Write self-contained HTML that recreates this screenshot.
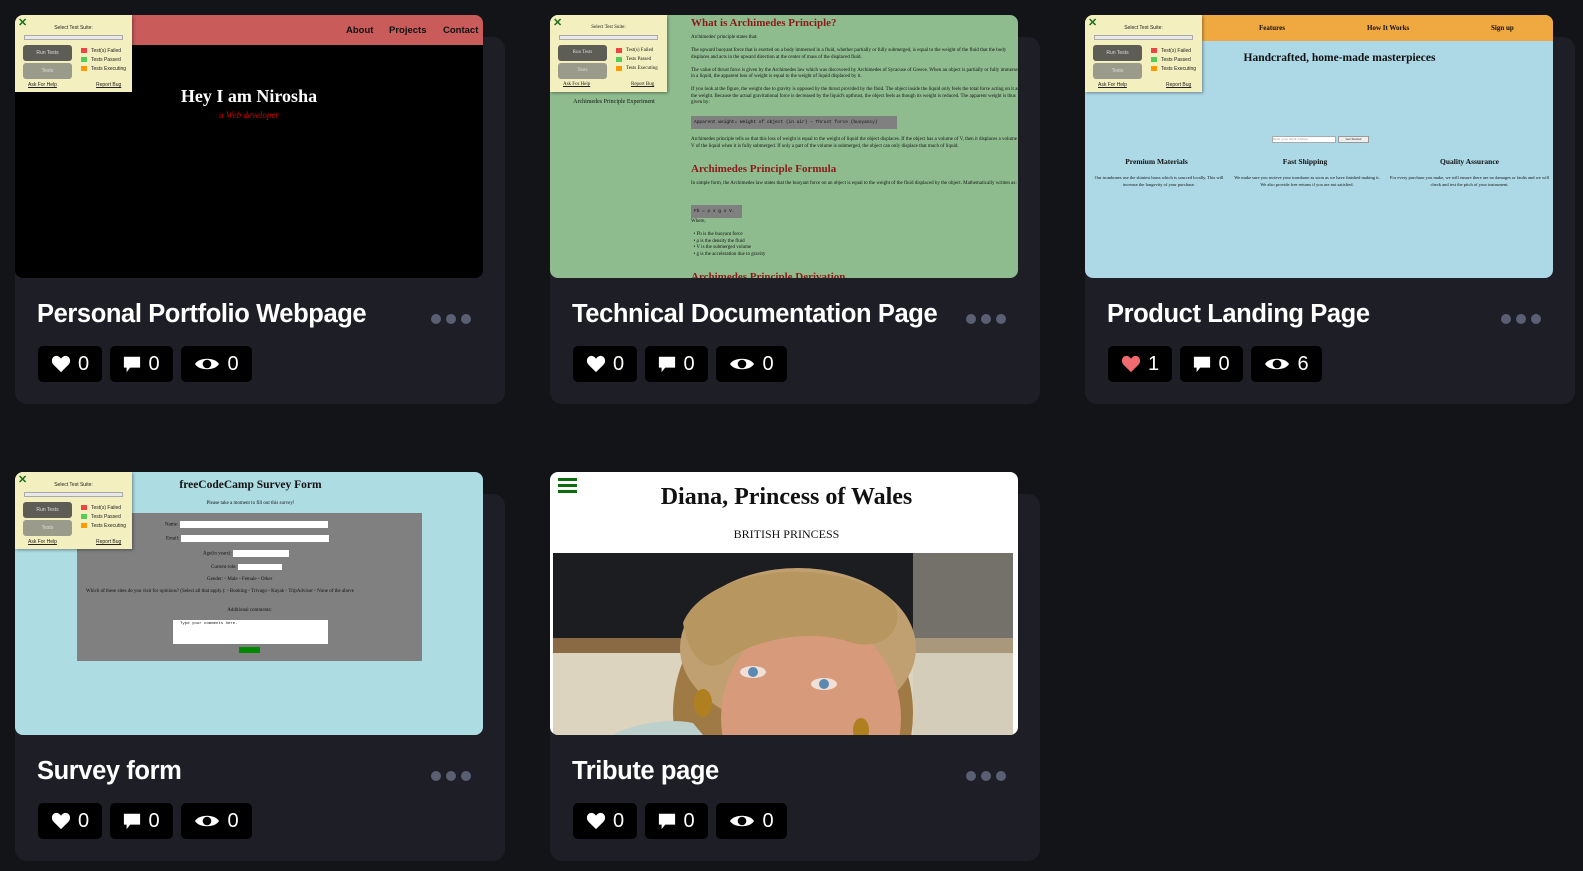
<!DOCTYPE html>
<html><head><meta charset="utf-8"><style>
*{box-sizing:border-box;margin:0;padding:0}
body{width:1583px;height:871px;background:#131417;overflow:hidden;position:relative;font-family:"Liberation Sans",sans-serif}
.card{position:absolute;width:490px;height:367px;background:#1e1f26;border-radius:12px}
.thumb{position:absolute;width:468px;height:263px;border-radius:8px;overflow:hidden}
.title{position:absolute;color:#fff;font-weight:bold;font-size:25.5px;letter-spacing:-0.4px;white-space:nowrap}
.dots{position:absolute;display:flex;gap:5px}
.dots i{width:10px;height:10px;border-radius:50%;background:#5a5f73;display:block}
.stat{position:absolute;height:36px;background:#000;border-radius:5px;color:#fff;font-size:20px;display:flex;align-items:center;justify-content:center;gap:7px}
.stat svg{display:block}
.ts{position:absolute;left:0;top:0;width:117px;height:77px;background:#f4efbf;box-shadow:1px 1px 3px rgba(0,0,0,.4);font-size:5px;color:#222;z-index:2}
.ts .x{position:absolute;left:3px;top:1px;color:#1a6e1a;font-size:11px;font-weight:bold}
.ts .l{position:absolute;left:0;width:117px;text-align:center;top:10px}
.ts .sel{position:absolute;left:9px;top:20px;width:99px;height:5px;background:#e8e8e8;border:1px solid #aaa}
.ts .b1{position:absolute;left:8px;top:30px;width:49px;height:16px;background:#5d5d55;border-radius:3px;color:#ddd;text-align:center;line-height:16px}
.ts .b2{position:absolute;left:8px;top:48px;width:49px;height:16px;background:#9b9b8c;border-radius:3px;color:#ddd;text-align:center;line-height:16px}
.ts .k{position:absolute;left:66px;width:6px;height:5px}
.ts .kt{position:absolute;left:76px}
.ts .f1{position:absolute;left:13px;top:67px;text-decoration:underline}
.ts .f2{position:absolute;left:81px;top:67px;text-decoration:underline}
.serif{font-family:"Liberation Serif",serif}
</style></head><body>

<!-- Row 1 col 1 -->
<div class="card" style="left:15px;top:37px"></div>
<div class="thumb" style="left:15px;top:15px;background:#000">
 <div style="position:absolute;left:0;top:0;width:468px;height:30px;background:#c95b5b"></div>
 <div style="position:absolute;top:10px;left:331px;font-size:9.5px;font-weight:bold;color:#111">About</div>
 <div style="position:absolute;top:10px;left:374px;font-size:9.5px;font-weight:bold;color:#111">Projects</div>
 <div style="position:absolute;top:10px;left:428px;font-size:9.5px;font-weight:bold;color:#111">Contact</div>
 <div class="serif" style="position:absolute;top:71px;left:0;width:468px;text-align:center;color:#fff;font-size:18px;font-weight:bold">Hey I am Nirosha</div>
 <div class="serif" style="position:absolute;top:95px;left:0;width:468px;text-align:center;color:#c00;font-size:9px;font-style:italic">a Web developer</div>
 <div class="ts"><span class="x">✕</span><div class="l">Select Test Suite:</div><div class="sel"></div><div class="b1">Run Tests</div><div class="b2">Tests</div>
 <div class="k" style="top:33px;background:#e44"></div><div class="kt" style="top:33px">Test(s) Failed</div>
 <div class="k" style="top:42px;background:#5c5"></div><div class="kt" style="top:42px">Tests Passed</div>
 <div class="k" style="top:51px;background:#f90"></div><div class="kt" style="top:51px">Tests Executing</div>
 <div class="f1">Ask For Help</div><div class="f2">Report Bug</div></div>
</div>
<div class="title" style="left:37px;top:300px">Personal Portfolio Webpage</div>
<div class="dots" style="left:431px;top:314px"><i></i><i></i><i></i></div>
<div class="stat" style="left:38px;top:346px;width:64px"><svg width="20" height="18" viewBox="0 0 24 22"><path d="M12 21 L3 12 C-1 8 1 1 6.5 1 C9 1 11 3 12 4.5 C13 3 15 1 17.5 1 C23 1 25 8 21 12Z" fill="#fff"/></svg>0</div>
<div class="stat" style="left:110px;top:346px;width:63px"><svg width="18" height="18" viewBox="0 0 20 20"><path d="M1 2 H19 V14 H8 L4 19 V14 H1Z" fill="#fff"/></svg>0</div>
<div class="stat" style="left:181px;top:346px;width:71px"><svg width="26" height="16" viewBox="0 0 26 16"><path d="M1 8 C5 1 21 1 25 8 C21 15 5 15 1 8Z" fill="#fff"/><circle cx="13" cy="8" r="4.3" fill="#000"/></svg>0</div>

<!-- Row 1 col 2 -->
<div class="card" style="left:550px;top:37px"></div>
<div class="thumb serif" style="left:550px;top:15px;background:#8fbc8f;color:#111">
 <div style="position:absolute;left:9px;top:84px;width:110px;text-align:center;font-size:6px">Archimedes Principle Experiment</div>
 <div style="position:absolute;left:141px;top:2px;width:330px;font-size:11px;font-weight:bold;color:#8b1a1a">What is Archimedes Principle?</div>
 <div style="position:absolute;left:141px;top:20px;width:330px;font-size:5px;line-height:6.5px">Archimedes' principle states that:<br><br>The upward buoyant force that is exerted on a body immersed in a fluid, whether partially or fully submerged, is equal to the weight of the fluid that the body displaces and acts in the upward direction at the center of mass of the displaced fluid.<br><br>The value of thrust force is given by the Archimedes law which was discovered by Archimedes of Syracuse of Greece. When an object is partially or fully immersed in a liquid, the apparent loss of weight is equal to the weight of liquid displaced by it.<br><br>If you look at the figure, the weight due to gravity is opposed by the thrust provided by the fluid. The object inside the liquid only feels the total force acting on it as the weight. Because the actual gravitational force is decreased by the liquid's upthrust, the object feels as though its weight is reduced. The apparent weight is thus given by:</div>
 <div style="position:absolute;left:141px;top:101px;width:206px;height:13px;background:#808080;font-family:'Liberation Mono',monospace;font-size:4.5px;line-height:13px;padding-left:3px">Apparent weight= Weight of object (in air) – Thrust force (buoyancy)</div>
 <div style="position:absolute;left:141px;top:122px;width:330px;font-size:5px;line-height:6.5px">Archimedes principle tells us that this loss of weight is equal to the weight of liquid the object displaces. If the object has a volume of V, then it displaces a volume V of the liquid when it is fully submerged. If only a part of the volume is submerged, the object can only displace that much of liquid.</div>
 <div style="position:absolute;left:141px;top:148px;font-size:11px;font-weight:bold;color:#8b1a1a">Archimedes Principle Formula</div>
 <div style="position:absolute;left:141px;top:166px;width:330px;font-size:5px;line-height:6.5px">In simple form, the Archimedes law states that the buoyant force on an object is equal to the weight of the fluid displaced by the object. Mathematically written as:</div>
 <div style="position:absolute;left:141px;top:190px;width:51px;height:13px;background:#808080;font-family:'Liberation Mono',monospace;font-size:4.5px;line-height:13px;padding-left:3px">Fb = ρ x g x V.</div>
 <div style="position:absolute;left:141px;top:204px;font-size:5px;line-height:6.5px">Where,<br><br>&nbsp;&nbsp;• Fb is the buoyant force<br>&nbsp;&nbsp;• ρ is the density the fluid<br>&nbsp;&nbsp;• V is the submerged volume<br>&nbsp;&nbsp;• g is the acceleration due to gravity</div>
 <div style="position:absolute;left:141px;top:256px;font-size:11px;font-weight:bold;color:#8b1a1a">Archimedes Principle Derivation</div>
 <div class="ts"><span class="x">✕</span><div class="l">Select Test Suite:</div><div class="sel"></div><div class="b1">Run Tests</div><div class="b2">Tests</div>
 <div class="k" style="top:33px;background:#e44"></div><div class="kt" style="top:33px">Test(s) Failed</div>
 <div class="k" style="top:42px;background:#5c5"></div><div class="kt" style="top:42px">Tests Passed</div>
 <div class="k" style="top:51px;background:#f90"></div><div class="kt" style="top:51px">Tests Executing</div>
 <div class="f1">Ask For Help</div><div class="f2">Report Bug</div></div>
</div>
<div class="title" style="left:572px;top:300px">Technical Documentation Page</div>
<div class="dots" style="left:966px;top:314px"><i></i><i></i><i></i></div>
<div class="stat" style="left:573px;top:346px;width:64px"><svg width="20" height="18" viewBox="0 0 24 22"><path d="M12 21 L3 12 C-1 8 1 1 6.5 1 C9 1 11 3 12 4.5 C13 3 15 1 17.5 1 C23 1 25 8 21 12Z" fill="#fff"/></svg>0</div>
<div class="stat" style="left:645px;top:346px;width:63px"><svg width="18" height="18" viewBox="0 0 20 20"><path d="M1 2 H19 V14 H8 L4 19 V14 H1Z" fill="#fff"/></svg>0</div>
<div class="stat" style="left:716px;top:346px;width:71px"><svg width="26" height="16" viewBox="0 0 26 16"><path d="M1 8 C5 1 21 1 25 8 C21 15 5 15 1 8Z" fill="#fff"/><circle cx="13" cy="8" r="4.3" fill="#000"/></svg>0</div>

<!-- Row 1 col 3 -->
<div class="card" style="left:1085px;top:37px"></div>
<div class="thumb serif" style="left:1085px;top:15px;background:#add8e6;color:#111">
 <div style="position:absolute;left:0;top:0;width:468px;height:26px;background:#f0a840"></div>
 <div style="position:absolute;top:9px;left:174px;font-size:7px;font-weight:bold">Features</div>
 <div style="position:absolute;top:9px;left:282px;font-size:7px;font-weight:bold">How It Works</div>
 <div style="position:absolute;top:9px;left:406px;font-size:7px;font-weight:bold">Sign up</div>
 <div style="position:absolute;top:37px;left:0;width:468px;text-align:center;padding-left:41px;font-size:11.5px;font-weight:bold">Handcrafted, home-made masterpieces</div>
 <div style="position:absolute;top:121px;left:187px;width:64px;height:7px;background:#fff;border:1px solid #aaa;font-size:3.5px;color:#999">Enter your email address</div>
 <div style="position:absolute;top:121px;left:253px;width:31px;height:7px;background:#eee;border:1px solid #999;font-size:3.5px;text-align:center">Get Started</div>
 <div style="position:absolute;top:142px;left:4px;width:135px;text-align:center;font-size:7.5px;font-weight:bold">Premium Materials</div>
 <div style="position:absolute;top:142px;left:145px;width:150px;text-align:center;font-size:7.5px;font-weight:bold">Fast Shipping</div>
 <div style="position:absolute;top:142px;left:302px;width:165px;text-align:center;font-size:7.5px;font-weight:bold">Quality Assurance</div>
 <div style="position:absolute;top:160px;left:4px;width:140px;text-align:center;font-size:4.5px;line-height:6.5px">Our trombones use the shiniest brass which is sourced locally. This will increase the longevity of your purchase.</div>
 <div style="position:absolute;top:160px;left:148px;width:148px;text-align:center;font-size:4.5px;line-height:6.5px">We make sure you recieve your trombone as soon as we have finished making it. We also provide free returns if you are not satisfied.</div>
 <div style="position:absolute;top:160px;left:302px;width:165px;text-align:center;font-size:4.5px;line-height:6.5px">For every purchase you make, we will ensure there are no damages or faults and we will check and test the pitch of your instrument.</div>
 <div class="ts" style="font-family:'Liberation Sans',sans-serif"><span class="x">✕</span><div class="l">Select Test Suite:</div><div class="sel"></div><div class="b1">Run Tests</div><div class="b2">Tests</div>
 <div class="k" style="top:33px;background:#e44"></div><div class="kt" style="top:33px">Test(s) Failed</div>
 <div class="k" style="top:42px;background:#5c5"></div><div class="kt" style="top:42px">Tests Passed</div>
 <div class="k" style="top:51px;background:#f90"></div><div class="kt" style="top:51px">Tests Executing</div>
 <div class="f1">Ask For Help</div><div class="f2">Report Bug</div></div>
</div>
<div class="title" style="left:1107px;top:300px">Product Landing Page</div>
<div class="dots" style="left:1501px;top:314px"><i></i><i></i><i></i></div>
<div class="stat" style="left:1108px;top:346px;width:64px"><svg width="20" height="18" viewBox="0 0 24 22"><path d="M12 21 L3 12 C-1 8 1 1 6.5 1 C9 1 11 3 12 4.5 C13 3 15 1 17.5 1 C23 1 25 8 21 12Z" fill="#f06b70"/></svg>1</div>
<div class="stat" style="left:1180px;top:346px;width:63px"><svg width="18" height="18" viewBox="0 0 20 20"><path d="M1 2 H19 V14 H8 L4 19 V14 H1Z" fill="#fff"/></svg>0</div>
<div class="stat" style="left:1251px;top:346px;width:71px"><svg width="26" height="16" viewBox="0 0 26 16"><path d="M1 8 C5 1 21 1 25 8 C21 15 5 15 1 8Z" fill="#fff"/><circle cx="13" cy="8" r="4.3" fill="#000"/></svg>6</div>

<!-- Row 2 col 1 -->
<div class="card" style="left:15px;top:494px"></div>
<div class="thumb serif" style="left:15px;top:472px;background:#aedce3;color:#111">
 <div style="position:absolute;top:7px;left:0;width:468px;text-align:center;padding-left:3px;font-size:11.5px;font-weight:bold">freeCodeCamp Survey Form</div>
 <div style="position:absolute;top:29px;left:0;width:468px;text-align:center;padding-left:3px;font-size:5px">Please take a moment to fill out this survey!</div>
 <div style="position:absolute;top:41px;left:62px;width:345px;height:148px;background:#808080;font-size:5px">
  <div style="position:absolute;top:8px;left:88px">Name: <span style="display:inline-block;width:148px;height:7px;background:#fff;vertical-align:middle"></span></div>
  <div style="position:absolute;top:22px;left:89px">Email: <span style="display:inline-block;width:148px;height:7px;background:#fff;vertical-align:middle"></span></div>
  <div style="position:absolute;top:37px;left:126px">Age(in years): <span style="display:inline-block;width:56px;height:7px;background:#fff;vertical-align:middle"></span></div>
  <div style="position:absolute;top:51px;left:134px">Current role: <span style="display:inline-block;width:44px;height:6px;background:#fff;vertical-align:middle"></span></div>
  <div style="position:absolute;top:64px;left:130px">Gender: ▫ Male ▫ Female ▫ Other</div>
  <div style="position:absolute;top:76px;left:9px;white-space:nowrap">Which of these sites do you visit for opinions? (Select all that apply.): ▫ Booking ▫ Trivago ▫ Kayak ▫ TripAdvisor ▫ None of the above</div>
  <div style="position:absolute;top:95px;left:0;width:345px;text-align:center">Additional comments:</div>
  <div style="position:absolute;top:107px;left:96px;width:155px;height:24px;background:#fff;font-family:'Liberation Mono',monospace;font-size:4px;padding:2px 7px">Type your comments here.</div>
  <div style="position:absolute;top:134px;left:162px;width:21px;height:6px;background:#080"></div>
 </div>
 <div class="ts" style="font-family:'Liberation Sans',sans-serif"><span class="x">✕</span><div class="l">Select Test Suite:</div><div class="sel"></div><div class="b1">Run Tests</div><div class="b2">Tests</div>
 <div class="k" style="top:33px;background:#e44"></div><div class="kt" style="top:33px">Test(s) Failed</div>
 <div class="k" style="top:42px;background:#5c5"></div><div class="kt" style="top:42px">Tests Passed</div>
 <div class="k" style="top:51px;background:#f90"></div><div class="kt" style="top:51px">Tests Executing</div>
 <div class="f1">Ask For Help</div><div class="f2">Report Bug</div></div>
</div>
<div class="title" style="left:37px;top:757px">Survey form</div>
<div class="dots" style="left:431px;top:771px"><i></i><i></i><i></i></div>
<div class="stat" style="left:38px;top:803px;width:64px"><svg width="20" height="18" viewBox="0 0 24 22"><path d="M12 21 L3 12 C-1 8 1 1 6.5 1 C9 1 11 3 12 4.5 C13 3 15 1 17.5 1 C23 1 25 8 21 12Z" fill="#fff"/></svg>0</div>
<div class="stat" style="left:110px;top:803px;width:63px"><svg width="18" height="18" viewBox="0 0 20 20"><path d="M1 2 H19 V14 H8 L4 19 V14 H1Z" fill="#fff"/></svg>0</div>
<div class="stat" style="left:181px;top:803px;width:71px"><svg width="26" height="16" viewBox="0 0 26 16"><path d="M1 8 C5 1 21 1 25 8 C21 15 5 15 1 8Z" fill="#fff"/><circle cx="13" cy="8" r="4.3" fill="#000"/></svg>0</div>

<!-- Row 2 col 2 -->
<div class="card" style="left:550px;top:494px"></div>
<div class="thumb serif" style="left:550px;top:472px;background:#fff;color:#111">
 <div style="position:absolute;left:8px;top:6px;width:19px;height:3px;background:#0a6e0a;box-shadow:0 6px 0 #0a6e0a,0 12px 0 #0a6e0a"></div>
 <div style="position:absolute;top:12px;left:0;width:468px;text-align:center;padding-left:5px;font-size:24px;font-weight:bold">Diana, Princess of Wales</div>
 <div style="position:absolute;top:55px;left:0;width:468px;text-align:center;padding-left:5px;font-size:12px">BRITISH PRINCESS</div>
 <svg style="position:absolute;left:3px;top:81px" width="460" height="182" viewBox="0 0 460 182">
  <rect width="460" height="182" fill="#3a3630"/>
  <rect x="0" y="0" width="460" height="85" fill="#1c1d20"/>
  <rect x="0" y="85" width="460" height="15" fill="#8a6a45"/>
  <rect x="0" y="100" width="460" height="82" fill="#dcd4be"/>
  <rect x="360" y="0" width="100" height="182" fill="#c9c5b4" opacity="0.5"/>
  <ellipse cx="240" cy="160" rx="120" ry="130" fill="#a07a45"/>
  <ellipse cx="245" cy="95" rx="118" ry="80" fill="#c0a070"/>
  <ellipse cx="258" cy="165" rx="90" ry="100" fill="#d79a7a"/>
  <path d="M130 70 C150 20 260 0 330 40 C360 60 340 100 300 90 C260 75 200 85 170 110 C150 120 135 100 130 70Z" fill="#b89660"/>
  <ellipse cx="200" cy="119" rx="13" ry="6" fill="#f0e0d8"/><circle cx="200" cy="119" r="5" fill="#5a8ab0"/>
  <ellipse cx="271" cy="131" rx="13" ry="6" fill="#f0e0d8"/><circle cx="271" cy="131" r="5" fill="#5a8ab0"/>
  <ellipse cx="150" cy="150" rx="9" ry="14" fill="#b08020"/>
  <ellipse cx="308" cy="177" rx="8" ry="12" fill="#b08020"/>
  <path d="M60 182 C80 170 120 165 140 170 L150 182Z" fill="#bcd0cc"/>
 </svg>
</div>
<div class="title" style="left:572px;top:757px">Tribute page</div>
<div class="dots" style="left:966px;top:771px"><i></i><i></i><i></i></div>
<div class="stat" style="left:573px;top:803px;width:64px"><svg width="20" height="18" viewBox="0 0 24 22"><path d="M12 21 L3 12 C-1 8 1 1 6.5 1 C9 1 11 3 12 4.5 C13 3 15 1 17.5 1 C23 1 25 8 21 12Z" fill="#fff"/></svg>0</div>
<div class="stat" style="left:645px;top:803px;width:63px"><svg width="18" height="18" viewBox="0 0 20 20"><path d="M1 2 H19 V14 H8 L4 19 V14 H1Z" fill="#fff"/></svg>0</div>
<div class="stat" style="left:716px;top:803px;width:71px"><svg width="26" height="16" viewBox="0 0 26 16"><path d="M1 8 C5 1 21 1 25 8 C21 15 5 15 1 8Z" fill="#fff"/><circle cx="13" cy="8" r="4.3" fill="#000"/></svg>0</div>

</body></html>
